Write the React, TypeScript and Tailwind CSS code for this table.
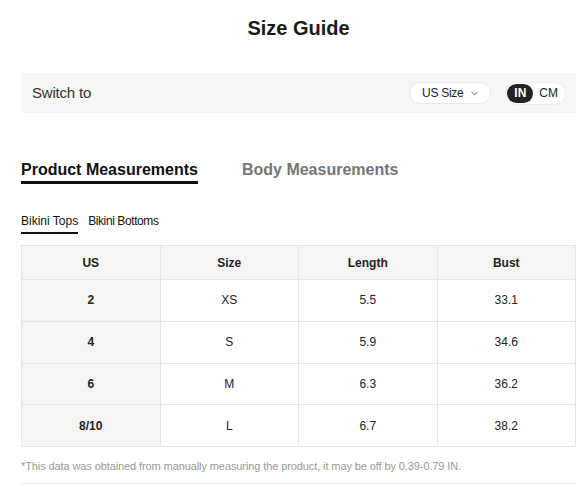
import { ChevronDown } from 'lucide-react';

const rows = [
  { us: '2', size: 'XS', length: '5.5', bust: '33.1' },
  { us: '4', size: 'S', length: '5.9', bust: '34.6' },
  { us: '6', size: 'M', length: '6.3', bust: '36.2' },
  { us: '8/10', size: 'L', length: '6.7', bust: '38.2' },
];

export default function App() {
  return (
    <div className="min-h-screen bg-white [font-family:'Liberation_Sans',Arial,sans-serif] text-[#222]">
      <div className="ml-[21px] w-[555px]">
        <h1 className="pt-[16px] text-center text-[20px] font-bold leading-[24px] text-[#1a1a1a]">
          Size Guide
        </h1>

        {/* unit switcher */}
        <div className="mt-[33px] flex h-[40px] items-center justify-between bg-[#f6f6f6] pl-[11px] pr-[10px]">
          <span className="text-[15px] tracking-[-0.2px] text-[#333]">Switch to</span>
          <div className="flex items-center gap-[14px]">
            <button className="flex h-[22px] items-center gap-[6px] rounded-full border border-[#e8e8e8] bg-white pl-[12px] pr-[10px] text-[12px] tracking-[-0.3px] text-[#222]">
              US Size
              <ChevronDown size={11} strokeWidth={1.5} />
            </button>
            <div className="flex h-[23px] items-center rounded-full border border-[#ececec] bg-white p-[1px] text-[12px]">
              <span className="flex h-[19px] items-center rounded-full bg-[#222] px-[7px] font-bold text-white">IN</span>
              <span className="px-[6px] text-[#222]">CM</span>
            </div>
          </div>
        </div>

        {/* measurement tabs */}
        <div className="mt-[47px] flex gap-[44px]">
          <div className="border-b-[3px] border-[#111] pb-[2px] text-[16px] font-bold leading-[19px] text-[#111]">
            Product Measurements
          </div>
          <div className="text-[16px] font-bold leading-[19px] text-[#767676]">Body Measurements</div>
        </div>

        <div className="mt-[30px] flex gap-[10px] text-[12px] leading-[14px]">
          <div className="border-b-2 border-[#111] pb-[4px] text-[#111]">Bikini Tops</div>
          <div className="tracking-[-0.4px] text-[#111]">Bikini Bottoms</div>
        </div>

        {/* size table */}
        <table className="mt-[11px] w-full table-fixed border-collapse text-[12px] text-[#222]">
          <thead>
            <tr className="h-[34px] bg-[#f5f5f5]">
              <th className="border border-[#e5e5e5] font-bold">US</th>
              <th className="border border-[#e5e5e5] font-bold">Size</th>
              <th className="border border-[#e5e5e5] font-bold">Length</th>
              <th className="border border-[#e5e5e5] font-bold">Bust</th>
            </tr>
          </thead>
          <tbody>
            {rows.map((r) => (
              <tr key={r.us} className="h-[41.75px]">
                <td className="border border-[#e5e5e5] bg-[#f5f5f5] text-center font-bold">{r.us}</td>
                <td className="border border-[#e5e5e5] text-center">{r.size}</td>
                <td className="border border-[#e5e5e5] text-center">{r.length}</td>
                <td className="border border-[#e5e5e5] text-center">{r.bust}</td>
              </tr>
            ))}
          </tbody>
        </table>

        <p className="mt-[12px] text-[11px] leading-[14px] tracking-[-0.1px] text-[#999]">
          *This data was obtained from manually measuring the product, it may be off by 0.39-0.79 IN.
        </p>
        <div className="mt-[10px] border-b border-[#e8e8e8]" />
      </div>
    </div>
  );
}
